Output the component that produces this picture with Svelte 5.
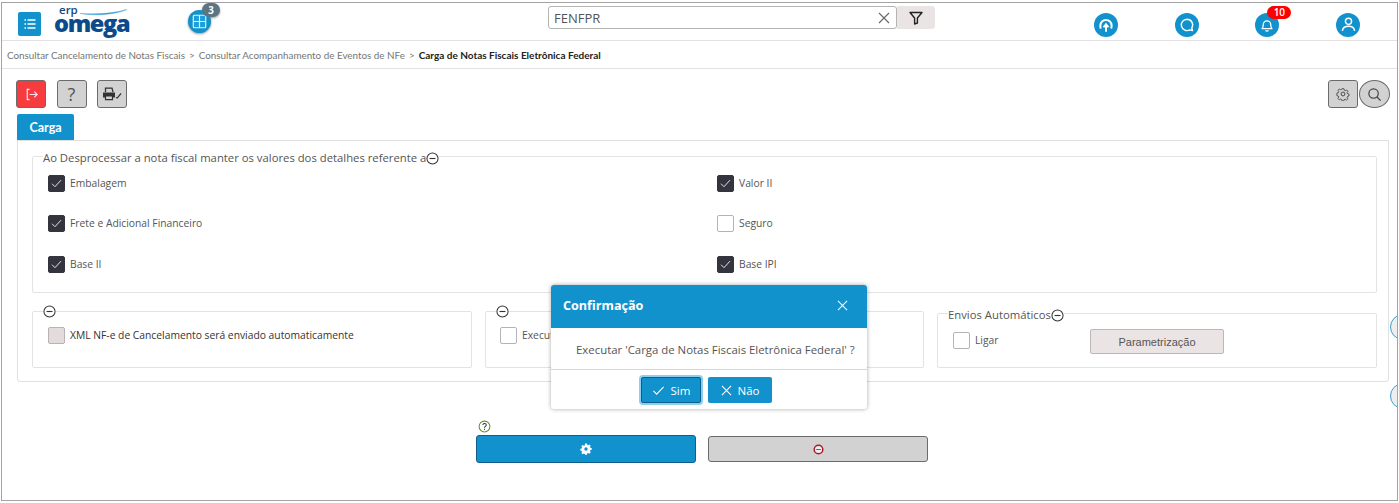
<script>
  let crumbs = ['Consultar Cancelamento de Notas Fiscais', 'Consultar Acompanhamento de Eventos de NFe'];
  let left = [
    { label: 'Embalagem', on: true },
    { label: 'Frete e Adicional Financeiro', on: true },
    { label: 'Base II', on: true }
  ];
  let right = [
    { label: 'Valor II', on: true },
    { label: 'Seguro', on: false },
    { label: 'Base IPI', on: true }
  ];
</script>

{#snippet check(on)}
  <span class="box" class:on>
    {#if on}
      <svg viewBox="0 0 16 16" width="15" height="15"><path d="M3.2 8.2l3.200 3.200 6.400-7" fill="none" stroke="#eee" stroke-width="1" /></svg>
    {/if}
  </span>
{/snippet}

{#snippet minus()}
  <svg class="minus" viewBox="0 0 14 14" width="13" height="13"><circle cx="7" cy="7" r="6" fill="none" stroke="#333" stroke-width="1.100" /><path d="M3.800 7h6.400" stroke="#333" stroke-width="1.200" /></svg>
{/snippet}

<div class="frame">
  <header class="top">
    <div class="brand">
      <button class="menu" aria-label="menu">
        <svg viewBox="0 0 16 16" width="16" height="16"><path d="M5.500 4h8M5.500 8h8M5.500 12h8" stroke="#fff" stroke-width="1.500" /><path d="M2.500 4H4M2.500 8H4M2.500 12H4" stroke="#fff" stroke-width="1.500" /></svg>
      </button>
      <div class="logo">
        <span class="erp">erp</span>
        <span class="omega">omega</span>
        <svg class="swoosh" viewBox="0 0 47 7" width="47" height="7"><path d="M0 4.500C16 7 34 6 47 .500 33 4.500 16 5.500 0 4.500z" fill="#3f9fd6" stroke="#3f9fd6" stroke-width=".4" /></svg>
      </div>
      <div class="apps">
        <svg viewBox="0 0 24 24" width="23" height="23"><circle cx="12" cy="12" r="12" fill="#1192cc" /><rect x="5.500" y="5.500" width="13" height="13" rx="1" fill="#1aa0dc" stroke="#e6f3fa" stroke-width="1.200" /><path d="M12 5.500v13M5.500 12h13" stroke="#e6f3fa" stroke-width="1.200" /></svg>
        <span class="apps-count">3</span>
      </div>
    </div>
    <div class="search">
      <div class="search-input">
        <span>FENFPR</span>
        <svg viewBox="0 0 12 12" width="12" height="12"><path d="M1 1l10 10M11 1L1 11" stroke="#666" stroke-width="1.100" /></svg>
      </div>
      <div class="filter">
        <svg viewBox="0 0 14 14" width="14" height="14"><path d="M1 1.500h12L8.400 7v5L5.600 13V7z" fill="none" stroke="#222" stroke-width="1.400" stroke-linejoin="round" /></svg>
      </div>
    </div>
    <div class="actions">
      <span class="round">
        <svg viewBox="0 0 16 16" width="18" height="18"><path d="M3.400 11.200A5 5 0 0 1 3 8.500a5 5 0 0 1 10 0c0 1-.2 1.900-.4 2.700" fill="none" stroke="#fff" stroke-width="1.800" /><path d="M8 14V8M5.800 10L8 7.400 10.200 10" fill="none" stroke="#fff" stroke-width="1.700" /></svg>
      </span>
      <span class="round">
        <svg viewBox="0 0 16 16" width="16" height="16"><path d="M8 2.200a5.700 5.700 0 1 0 2.800 10.700l2.700.6-.7-2.600A5.700 5.700 0 0 0 8 2.200z" fill="none" stroke="#fff" stroke-width="1.400" stroke-linejoin="round" /></svg>
      </span>
      <span class="round">
        <svg viewBox="0 0 16 16" width="16" height="16"><path d="M3 11.600c1-1 1.300-2 1.300-4a3.700 3.700 0 0 1 7.400 0c0 2 .3 3 1.300 4z" fill="none" stroke="#fff" stroke-width="1.300" stroke-linejoin="round" /><path d="M6.600 13.200a1.500 1.500 0 0 0 2.800 0" fill="none" stroke="#fff" stroke-width="1.200" /></svg>
        <span class="bell-count">10</span>
      </span>
      <span class="round">
        <svg viewBox="0 0 16 16" width="17" height="17"><circle cx="8" cy="5" r="2.900" fill="none" stroke="#fff" stroke-width="1.400" /><path d="M2.200 14c.4-3.200 2.800-4.400 5.800-4.400s5.400 1.200 5.800 4.400" fill="none" stroke="#fff" stroke-width="1.400" /></svg>
      </span>
    </div>
  </header>

  <nav class="crumbs">
    {#each crumbs as c}
      <span>{c}</span><span class="sep">&gt;</span>
    {/each}
    <strong>Carga de Notas Fiscais Eletrônica Federal</strong>
  </nav>

  <main class="page">
    <div class="tools">
      <div class="tool-group">
        <button class="tool red" aria-label="sair">
          <svg viewBox="0 0 16 16" width="15" height="15"><path d="M6 2.500H3.500v11H6" fill="none" stroke="#fde" stroke-width="1.300" /><path d="M6 8h8M11 5l3 3-3 3" fill="none" stroke="#fde" stroke-width="1.300" /></svg>
        </button>
        <button class="tool help">?</button>
        <button class="tool" aria-label="imprimir">
          <svg viewBox="0 0 20 14" width="20" height="14"><path d="M3.500 5V1.200h6.500L11 5" fill="none" stroke="#333" stroke-width="1.300" /><path d="M1 5.500h12v5H1z" fill="#333" /><path d="M3.500 9h7v3.600h-7z" fill="#d2d2d2" stroke="#333" stroke-width="1.200" /><path d="M14 10.500l1.200.6L19 6.500" fill="none" stroke="#333" stroke-width="1.200" /></svg>
        </button>
      </div>
      <div class="tool-group tight">
        <button class="tool" aria-label="configurar">
          <svg viewBox="0 0 16 16" width="14" height="14"><circle cx="8" cy="8" r="2.200" fill="none" stroke="#444" stroke-width="1.100" /><path d="M6.800 1.500h2.400l.4 1.900 1.300.6 1.700-1 1.600 1.700-1 1.600.6 1.400 1.700.4v2.400l-1.700.4-.6 1.300 1 1.700-1.700 1.600-1.600-1-1.400.6-.4 1.400H6.800l-.4-1.600-1.300-.6-1.700 1-1.600-1.700 1-1.600-.6-1.400-1.700-.4V6.900l1.700-.4.6-1.400-1-1.600 1.700-1.700 1.600 1 1.400-.6z" transform="translate(.6 .6) scale(.92)" fill="none" stroke="#444" stroke-width="1.100" stroke-linejoin="round" /></svg>
        </button>
        <button class="tool circle" aria-label="pesquisar">
          <svg viewBox="0 0 16 16" width="15" height="15"><circle cx="7" cy="7" r="5" fill="none" stroke="#444" stroke-width="1.300" /><path d="M10.700 10.700L14.500 14.500" stroke="#444" stroke-width="1.400" /></svg>
        </button>
      </div>
    </div>

    <div class="tab">Carga</div>

    <section class="panel">
      <fieldset class="details">
        <legend class="titled">Ao Desprocessar a nota fiscal manter os valores dos detalhes referente a{@render minus()}</legend>
        <div class="grid">
          {#each left as item, i}
            <label class="opt">{@render check(item.on)}<span>{item.label}</span></label>
            <label class="opt">{@render check(right[i].on)}<span>{right[i].label}</span></label>
          {/each}
        </div>
      </fieldset>

      <div class="row">
        <fieldset class="small">
          <legend>{@render minus()}</legend>
          <label class="opt xml"><span class="box off"></span><span>XML NF-e de Cancelamento será enviado automaticamente</span></label>
        </fieldset>
        <fieldset class="small">
          <legend>{@render minus()}</legend>
          <label class="opt low">{@render check(false)}<span>Executar</span></label>
        </fieldset>
        <fieldset class="small wide">
          <legend class="titled">Envios Automáticos{@render minus()}</legend>
          <div class="auto">
            <label class="opt">{@render check(false)}<span>Ligar</span></label>
            <button class="param">Parametrização</button>
          </div>
        </fieldset>
      </div>
    </section>

    <div class="bottom">
      <div class="run">
        <svg class="q" viewBox="0 0 14 14" width="13" height="13"><circle cx="7" cy="7" r="5.800" fill="none" stroke="#5f8f2c" stroke-width="1.100" /><path d="M5.200 5.400c.2-2.200 3.800-2 3.700.1 0 1.300-1.900 1.400-1.900 2.800" fill="none" stroke="#333" stroke-width="1.100" /><path d="M7 9.400v1.200" stroke="#333" stroke-width="1.100" /></svg>
        <button class="go" aria-label="executar">
          <svg viewBox="0 0 16 16" width="12" height="12"><path d="M6.500 0h3l.5 2.200 1.300.6L13.300 1.600l2.100 2.100-1.200 2 .6 1.300 2.200.5v3l-2.200.5-.6 1.300 1.200 2-2.100 2.100-2-1.200-1.300.6-.5 2.200h-3L6 16.800l-1.300-.6-2 1.200L.6 15.300l1.200-2-.6-1.300L-1 11.500v-3L1.200 8l.6-1.300-1.200-2L2.700 2.600l2 1.200L6 3.200z" transform="translate(1.300 .5) scale(.84)" fill="#fff" /><circle cx="8" cy="8" r="2.300" fill="#1192cc" /></svg>
        </button>
      </div>
      <button class="stop" aria-label="cancelar">
        <svg viewBox="0 0 12 12" width="11" height="11"><circle cx="6" cy="6" r="4.700" fill="#eee" stroke="#a8172c" stroke-width="1.600" /><path d="M3.500 6h5" stroke="#555" stroke-width="1" /></svg>
      </button>
    </div>

    <span class="edge first"></span>
    <span class="edge second"></span>
  </main>

  <div class="dialog" role="dialog">
    <div class="dialog-head">
      <span>Confirmação</span>
      <svg viewBox="0 0 12 12" width="11" height="11"><path d="M1 1l10 10M11 1L1 11" stroke="#fff" stroke-width="1.200" /></svg>
    </div>
    <div class="dialog-body">Executar 'Carga de Notas Fiscais Eletrônica Federal' ?</div>
    <div class="dialog-foot">
      <button class="dlg focus">
        <svg viewBox="0 0 14 14" width="13" height="13"><path d="M1.500 7.500l3.500 3.500 7.500-8" fill="none" stroke="#fff" stroke-width="1.100" /></svg>
        Sim
      </button>
      <button class="dlg">
        <svg viewBox="0 0 12 12" width="11" height="11"><path d="M1 1l10 10M11 1L1 11" stroke="#fff" stroke-width="1.200" /></svg>
        Não
      </button>
    </div>
  </div>
</div>

<style>
  :global(body) {
    background: #fff;
  }
  .frame {
    position: relative;
    box-sizing: border-box;
    width: 1397px;
    height: 499px;
    margin: 2px 0 0 1px;
    border: 1px solid #a3a3a3;
    overflow: hidden;
    font-family: "Open Sans", sans-serif;
    color: #555;
  }
  button {
    font-family: inherit;
    padding: 0;
  }
  .top {
    display: grid;
    grid-template-columns: 546px 387px 1fr;
    align-items: center;
    height: 37px;
    border-bottom: 1px solid #e2e2e2;
  }
  .brand {
    display: flex;
    align-items: center;
    padding-left: 16px;
    margin-top: 4px;
  }
  .menu {
    display: flex;
    align-items: center;
    justify-content: center;
    width: 23px;
    height: 24px;
    border: 0;
    border-radius: 2px;
    background: #1192cc;
  }
  .logo {
    position: relative;
    display: flex;
    flex-direction: column;
    width: 76px;
    margin: -6px 0 0 13px;
    color: #0d4a8a;
  }
  .erp {
    padding-left: 5px;
    font-size: 11.500px;
    font-weight: 600;
    line-height: 5px;
    color: #17457e;
  }
  .omega {
    font-size: 23.500px;
    line-height: 22px;
    font-weight: 800;
    letter-spacing: -1.300px;
  }
  .swoosh {
    position: absolute;
    left: 26px;
    top: 2px;
  }
  .apps {
    position: relative;
    display: flex;
    margin: -4px 0 0 58px;
    filter: drop-shadow(0 1px 1px #999);
  }
  .apps-count {
    position: absolute;
    left: 14px;
    top: -7px;
    width: 18px;
    height: 14px;
    border-radius: 7px;
    background: #5b7583;
    color: #fff;
    font-size: 10px;
    font-weight: 700;
    line-height: 14px;
    text-align: center;
  }
  .search {
    display: flex;
    align-items: center;
    margin-top: -8px;
  }
  .search-input {
    box-sizing: border-box;
    display: flex;
    align-items: center;
    justify-content: space-between;
    width: 349px;
    height: 23px;
    padding: 1px 6px 0 5px;
    border: 1px solid #b4b4b4;
    border-radius: 3px;
    font-size: 13px;
    color: #555;
  }
  .filter {
    display: flex;
    align-items: center;
    justify-content: center;
    width: 38px;
    height: 23px;
    border-radius: 0 3px 3px 0;
    background: #ebe4e4;
  }
  .actions {
    display: flex;
    gap: 56.700px;
    padding-left: 159px;
    margin-top: 6px;
  }
  .round {
    position: relative;
    display: flex;
    align-items: center;
    justify-content: center;
    width: 24px;
    height: 24px;
    border-radius: 50%;
    background: #1192cc;
  }
  .bell-count {
    position: absolute;
    left: 12px;
    top: -7px;
    width: 24px;
    height: 13px;
    border-radius: 7px;
    background: #f00;
    color: #fff;
    font-size: 10px;
    font-weight: 600;
    line-height: 13px;
    text-align: center;
  }
  .crumbs {
    display: flex;
    align-items: center;
    gap: 4px;
    height: 27px;
    padding-left: 5px;
    border-bottom: 1px solid #e2e2e2;
    font-family: Lato, sans-serif;
    font-size: 9.850px;
    color: #767676;
  }
  .crumbs strong {
    color: #222;
    font-size: 10px;
    font-weight: 700;
  }
  .page {
    position: relative;
    padding: 11px 0 0 14px;
  }
  .tools {
    display: flex;
    justify-content: space-between;
    width: 1374px;
  }
  .tool-group {
    display: flex;
    gap: 10.500px;
  }
  .tool-group.tight {
    gap: 1px;
  }
  .tool {
    box-sizing: border-box;
    display: flex;
    align-items: center;
    justify-content: center;
    width: 30px;
    height: 28px;
    border: 1px solid #6b6b6b;
    border-radius: 3px;
    background: #d2d2d2;
    color: #555;
  }
  .tool.red {
    background: #f73c3f;
  }
  .tool.help {
    font-size: 18px;
    font-weight: 400;
  }
  .tool.circle {
    width: 31px;
    border-radius: 50%;
  }
  .tab {
    box-sizing: border-box;
    width: 57px;
    height: 26px;
    margin: 6px 0 0 1px;
    padding-top: 1px;
    border-radius: 2px 2px 0 0;
    background: #1192cc;
    color: #fff;
    font-family: Lato, sans-serif;
    font-size: 12.500px;
    font-weight: 700;
    line-height: 26px;
    text-align: center;
  }
  .panel {
    box-sizing: border-box;
    margin-left: 1px;
    width: 1372px;
    height: 242px;
    padding: 5px 0 0 14px;
    border: 1px solid #e0e0e0;
    border-radius: 0 0 3px 3px;
  }
  fieldset {
    box-sizing: border-box;
    min-width: 0;
    margin: 0;
    padding: 0;
    border: 1px solid #e3e3e3;
    border-radius: 2px;
  }
  legend {
    display: flex;
    align-items: center;
    padding: 0;
    margin-left: 10px;
    font-size: 11.300px;
    line-height: 16px;
    color: #555;
  }
  legend.titled {
    padding-top: 4px;
  }
  .details {
    width: 1345px;
    height: 147px;
  }
  .minus {
    flex: none;
  }
  .grid {
    display: grid;
    grid-template-columns: 669px 1fr;
    grid-auto-rows: 40.400px;
    padding: 9px 0 0 15px;
  }
  .opt {
    display: flex;
    align-items: flex-start;
    gap: 5px;
    font-size: 10.300px;
    line-height: 17px;
    color: #555;
  }
  .box {
    box-sizing: border-box;
    flex: none;
    display: flex;
    align-items: center;
    justify-content: center;
    width: 17px;
    height: 17px;
    border: 1px solid #b4b4b4;
    border-radius: 2px;
    background: #fff;
  }
  .box.on {
    border-color: #34343e;
    background: #34343e;
  }
  .box.off {
    background: #e4dcdc;
  }
  .row {
    display: grid;
    grid-template-columns: 440px 439px 440px;
    gap: 13px;
    align-items: end;
    margin-top: 10px;
  }
  .small {
    height: 63px;
  }
  .small.wide {
    height: 65px;
  }
  .opt.xml {
    padding: 9px 0 0 15px;
    color: #333;
  }
  .opt.low {
    padding: 9px 0 0 14px;
  }
  .auto {
    display: flex;
    align-items: flex-start;
    padding: 6px 0 0 15px;
  }
  .auto .opt {
    width: 137px;
    margin-top: 3px;
  }
  .param {
    width: 134px;
    height: 25px;
    border: 1px solid #bdb6b6;
    border-radius: 2px;
    background: #ebe4e4;
    color: #555;
    font-family: "Liberation Sans", sans-serif;
    font-size: 11px;
  }
  .bottom {
    display: grid;
    grid-template-columns: 220px 220px;
    gap: 12px;
    align-items: end;
    margin: 38px 0 0 460px;
  }
  .run {
    display: flex;
    flex-direction: column;
  }
  .q {
    margin: 0 0 2px 2px;
  }
  .go {
    display: flex;
    align-items: center;
    justify-content: center;
    height: 28px;
    border: 1px solid #0e5f8c;
    border-radius: 3px;
    background: #1192cc;
  }
  .stop {
    display: flex;
    align-items: center;
    justify-content: center;
    height: 26px;
    margin-bottom: 1px;
    border: 1px solid #6b6b6b;
    border-radius: 3px;
    background: #d2d2d2;
  }
  .edge {
    position: absolute;
    box-sizing: border-box;
    left: 1388px;
    width: 26px;
    height: 26px;
    border: 1px solid #3d9fd2;
    border-radius: 50%;
    background: #eee;
  }
  .edge.first {
    top: 245px;
  }
  .edge.second {
    top: 314px;
  }
  .dialog {
    position: absolute;
    left: 549px;
    top: 282px;
    width: 316px;
    border-radius: 3px;
    background: #fff;
    box-shadow: 0 0 4px rgba(0, 0, 0, 0.35);
    overflow: hidden;
  }
  .dialog-head {
    box-sizing: border-box;
    display: flex;
    align-items: center;
    justify-content: space-between;
    height: 43px;
    padding: 0 19px 2px 12px;
    background: #1192cc;
    color: #fff;
    font-size: 12.600px;
    font-weight: 700;
  }
  .dialog-body {
    height: 41px;
    padding-left: 25px;
    border-bottom: 1px solid #d6d6d6;
    font-size: 11.400px;
    line-height: 43px;
    color: #555;
    white-space: nowrap;
  }
  .dialog-foot {
    display: flex;
    gap: 7px;
    padding: 7px 0 6px 90px;
  }
  .dlg {
    box-sizing: border-box;
    display: flex;
    align-items: center;
    justify-content: center;
    gap: 6px;
    width: 64px;
    height: 26px;
    border: 0;
    border-radius: 2px;
    background: #1192cc;
    color: #fff;
    font-size: 11.500px;
  }
  .dlg.focus {
    box-shadow: 0 0 0 2px #8ccdf0;
    border: 1px solid #0e5f8c;
    width: 60px;
  }
</style>
